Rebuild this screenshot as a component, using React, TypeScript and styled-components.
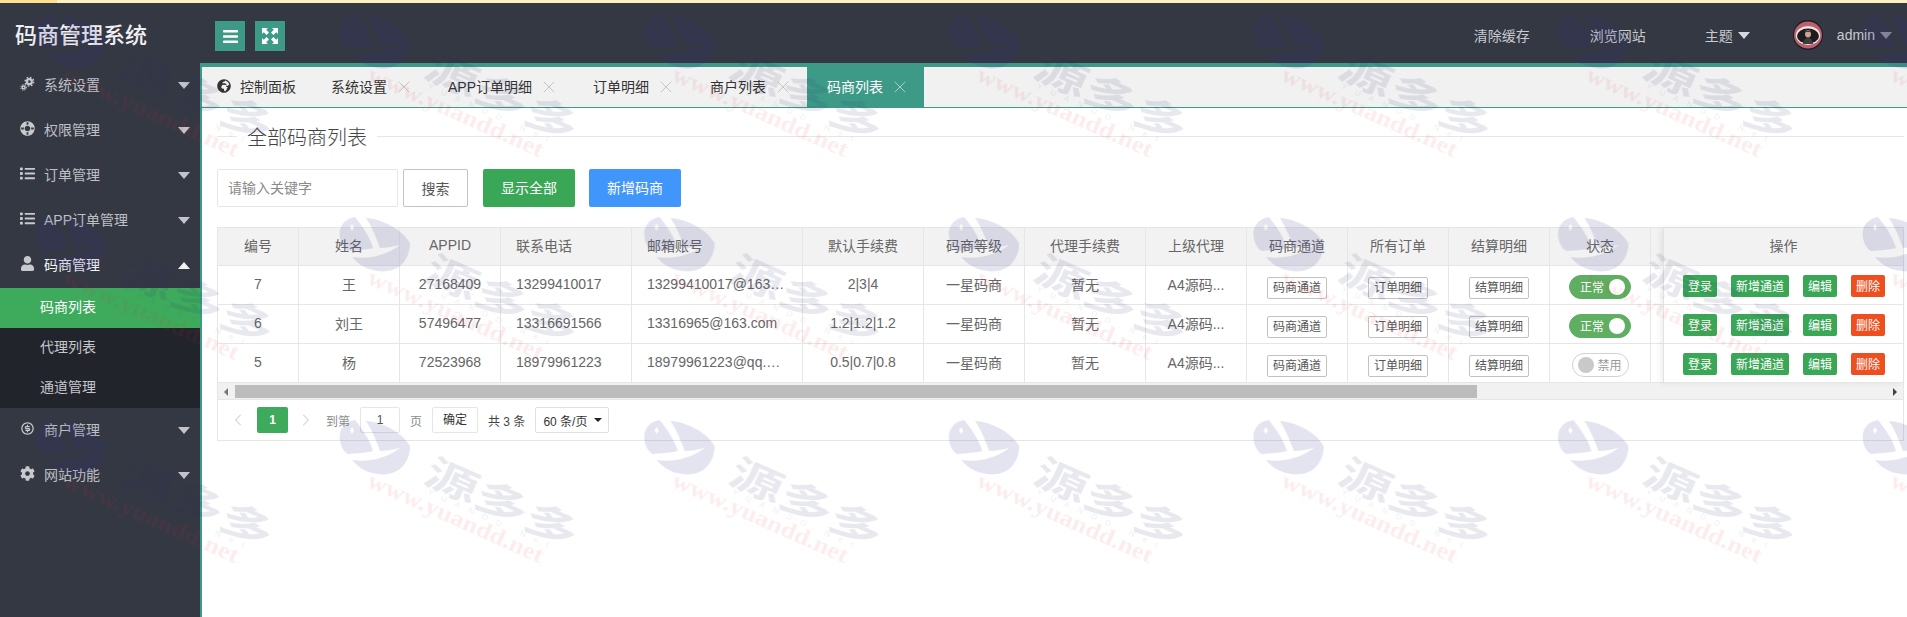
import React from "react";
import styled, { createGlobalStyle } from "styled-components";
import { FaBars, FaLifeRing, FaList, FaUser, FaCog, FaGlobeAfrica } from "react-icons/fa";
import { RiMoneyDollarCircleLine } from "react-icons/ri";
import { X, ChevronLeft, ChevronRight } from "lucide-react";

const Global = createGlobalStyle`
  html, body { margin: 0; padding: 0; height: 100%; overflow: hidden; background: #fff; }
  body, input { font-family: "Liberation Sans", "Noto Sans CJK SC", sans-serif; }
  * { box-sizing: border-box; }
`;

const Page = styled.div`
  display: flex;
  flex-direction: column;
  height: 617px;
  width: 1907px;
`;

const Strip = styled.div`
  display: flex;
  height: 3px;
  flex: none;
  background: #fdf1bd;
`;
const StripLead = styled.div`
  width: 57px;
  background: #fde08f;
`;

const Header = styled.header`
  display: flex;
  align-items: center;
  height: 60px;
  flex: none;
  padding-top: 6px;
  background: #343843;
`;
const Logo = styled.div`
  width: 215px;
  padding-left: 15px;
  font-size: 22px;
  font-weight: 500;
  line-height: 30px;
  color: #f0f0f2;
`;
const ToolButton = styled.button`
  display: flex;
  align-items: center;
  justify-content: center;
  width: 30px;
  height: 30px;
  margin-right: 10px;
  padding: 0;
  border: 0;
  background: #3d9a87;
  color: #fff;
`;
const HeaderRight = styled.nav`
  display: flex;
  align-items: center;
  margin-left: auto;
  padding: 0 15px 2px 0;
  color: #c9cad0;
  font-size: 14px;
`;
const HeaderLink = styled.span<{ $gap: number }>`
  display: flex;
  align-items: center;
  gap: 5px;
  margin-right: ${(p) => p.$gap}px;
`;
const Caret = styled.i<{ $up?: boolean; $color?: string; $w?: number }>`
  display: inline-block;
  flex: none;
  width: 0;
  height: 0;
  border-left: ${(p) => p.$w ?? 6}px solid transparent;
  border-right: ${(p) => p.$w ?? 6}px solid transparent;
  ${(p) =>
    p.$up
      ? `border-bottom: ${Math.round((p.$w ?? 6) * 1.1)}px solid ${p.$color ?? "#c4c4c8"};`
      : `border-top: ${Math.round((p.$w ?? 6) * 1.1)}px solid ${p.$color ?? "#c4c4c8"};`}
`;
const AvatarSvg = styled.svg`
  width: 30px;
  height: 30px;
  margin-right: 14px;
  flex: none;
`;

const Shell = styled.div`
  display: flex;
  flex: 1;
  min-height: 0;
`;
const Sidebar = styled.aside`
  width: 200px;
  flex: none;
  background: #343843;
`;
const MenuItem = styled.div<{ $open?: boolean }>`
  display: flex;
  align-items: center;
  height: 45px;
  padding: 0 10px 0 20px;
  font-size: 14px;
  color: ${(p) => (p.$open ? "#f4f4f4" : "#bfc0c5")};
`;
const MenuIcon = styled.span`
  display: flex;
  align-items: center;
  justify-content: center;
  width: 15px;
  margin-right: 9px;
  padding-bottom: 4px;
  font-size: 15px;
  color: #c8c9ce;
`;
const MenuLabel = styled.span`
  flex: 1;
  padding-bottom: 4px;
`;
const RingIcon = styled(FaLifeRing)`
  transform: rotate(45deg);
`;
const SubMenu = styled.div`
  background: #22242c;
`;
const SubItem = styled.div<{ $active?: boolean }>`
  height: 40px;
  line-height: 38px;
  padding-left: 40px;
  font-size: 14px;
  color: ${(p) => (p.$active ? "#fff" : "#c6c7cb")};
  background: ${(p) => (p.$active ? "#3dab5b" : "transparent")};
`;

const Main = styled.main`
  flex: 1;
  min-width: 0;
  border-top: 4px solid #3d9a87;
  border-left: 2px solid #3d9a87;
  display: flex;
  flex-direction: column;
`;
const TabBar = styled.div`
  display: flex;
  height: 41px;
  flex: none;
  background: #f1f1f1;
  border-bottom: 1px solid #3d9a87;
`;
const HomeTab = styled.div`
  display: flex;
  align-items: center;
  gap: 9px;
  width: 109px;
  padding: 0 0 2px 15px;
  font-size: 14px;
  color: #333;
`;
const Tab = styled.div<{ $active?: boolean }>`
  display: flex;
  align-items: center;
  gap: 10px;
  padding: 0 17px 2px 20px;
  font-size: 14px;
  color: ${(p) => (p.$active ? "#fff" : "#333")};
  background: ${(p) => (p.$active ? "#3d9a87" : "transparent")};
  svg {
    margin: 2px -3px 0;
    color: ${(p) => (p.$active ? "#b9dcd4" : "#bdbdbd")};
  }
`;
const Body = styled.div`
  flex: 1;
  padding: 0 3px 0 15px;
`;
const TitleRow = styled.div`
  display: flex;
  align-items: center;
  gap: 10px;
  height: 56px;
  font-size: 20px;
  font-weight: 300;
  color: #444;
`;
const TitleLine = styled.span<{ $grow?: boolean }>`
  height: 1px;
  background: #e6e6e6;
  width: 20px;
  flex: ${(p) => (p.$grow ? 1 : "none")};
`;
const Filter = styled.div`
  display: flex;
  height: 38px;
  margin-top: 5px;
`;
const SearchInput = styled.input`
  width: 181px;
  height: 38px;
  padding: 0 10px;
  border: 1px solid #e6e6e6;
  border-radius: 2px;
  font-size: 14px;
  outline: none;
  &::placeholder {
    color: #8a8a8a;
  }
`;
const SearchButton = styled.button`
  width: 65px;
  height: 38px;
  margin: 0 15px 0 5px;
  padding: 0;
  border: 1px solid #c4c4c4;
  border-radius: 2px;
  background: #fff;
  font: inherit;
  font-size: 14px;
  color: #555;
`;
const SolidButton = styled.button<{ $bg: string }>`
  width: 92px;
  height: 38px;
  margin-right: 14px;
  padding: 0 0 2px;
  border: 0;
  border-radius: 2px;
  background: ${(p) => p.$bg};
  color: #fff;
  font: inherit;
  font-size: 14px;
`;

const TableBox = styled.div`
  position: relative;
  margin-top: 20px;
  border: 1px solid #e6e6e6;
  width: 1687px;
`;
const TableClip = styled.div`
  overflow: hidden;
`;
const Table = styled.table`
  table-layout: fixed;
  border-collapse: separate;
  border-spacing: 0;
  width: 1686px;
  font-size: 14px;
  color: #666;
`;
const Th = styled.th<{ $left?: boolean }>`
  height: 38px;
  padding: 0 15px 3px;
  font-weight: 400;
  text-align: ${(p) => (p.$left ? "left" : "center")};
  background: #f2f2f2;
  border-right: 1px solid #e6e6e6;
  border-bottom: 1px solid #e6e6e6;
  white-space: nowrap;
`;
const Td = styled.td<{ $left?: boolean; $tight?: boolean; $control?: boolean }>`
  height: 39px;
  padding: ${(p) => (p.$control ? "0" : p.$tight ? "0 0 3px" : "0 15px 3px")};
  text-align: ${(p) => (p.$left ? "left" : "center")};
  border-right: 1px solid #e6e6e6;
  border-bottom: 1px solid #e6e6e6;
  white-space: nowrap;
  overflow: hidden;
  text-overflow: ellipsis;
`;
const LinkButton = styled.button`
  display: inline-block;
  vertical-align: middle;
  width: 60px;
  height: 22px;
  margin-top: 5px;
  padding: 0;
  border: 1px solid #c2c2c2;
  border-radius: 2px;
  background: #fff;
  font: inherit;
  font-size: 12px;
  line-height: 20px;
  color: #555;
`;
const Switch = styled.span<{ $on: boolean }>`
  display: inline-flex;
  align-items: center;
  vertical-align: middle;
  flex-direction: ${(p) => (p.$on ? "row" : "row-reverse")};
  justify-content: space-between;
  width: ${(p) => (p.$on ? 62 : 57)}px;
  height: 24px;
  margin-top: 3px;
  padding: ${(p) => (p.$on ? "0 5px 0 10px" : "0 6px 0 5px")};
  border-radius: 12px;
  border: 1px solid ${(p) => (p.$on ? "#5fae62" : "#d2d2d2")};
  background: ${(p) => (p.$on ? "#5fae62" : "#fff")};
  color: ${(p) => (p.$on ? "#fff" : "#999")};
  font-size: 12px;
`;
const Knob = styled.i<{ $on: boolean }>`
  display: block;
  width: 16px;
  height: 16px;
  border-radius: 50%;
  background: ${(p) => (p.$on ? "#fff" : "#c9c9c9")};
`;
const FixedColumn = styled.div`
  position: absolute;
  top: 0;
  right: 0;
  width: 240px;
  background: #fff;
  border-left: 1px solid #e2e2e2;
  box-shadow: -2px 0 6px rgba(0, 0, 0, 0.07);
`;
const FixedHead = styled.div`
  display: flex;
  align-items: center;
  justify-content: center;
  height: 38px;
  padding-bottom: 3px;
  font-size: 14px;
  color: #666;
  background: #f2f2f2;
  border-bottom: 1px solid #e6e6e6;
`;
const FixedRow = styled.div`
  display: flex;
  align-items: center;
  gap: 14px;
  height: 39px;
  padding: 1px 0 0 19px;
  border-bottom: 1px solid #e6e6e6;
`;
const OpButton = styled.button<{ $danger?: boolean }>`
  height: 22px;
  padding: 0 5px;
  border: 0;
  border-radius: 2px;
  background: ${(p) => (p.$danger ? "#ee4f20" : "#3aa757")};
  color: #fff;
  font: inherit;
  font-size: 12px;
  white-space: nowrap;
`;
const ScrollTrack = styled.div`
  display: flex;
  align-items: center;
  height: 17px;
  padding-top: 1px;
  background: #f1f1f1;
  border-bottom: 1px solid #e6e6e6;
`;
const ScrollArrow = styled.span<{ $end?: boolean }>`
  width: 0;
  height: 0;
  flex: none;
  border-top: 4px solid transparent;
  border-bottom: 4px solid transparent;
  ${(p) =>
    p.$end
      ? "margin-left: auto; margin-right: 6px; border-left: 4px solid #444;"
      : "margin: 0 7px 0 6px; border-right: 4px solid #777;"}
`;
const ScrollThumb = styled.span`
  display: block;
  width: 1242px;
  height: 13px;
  background: #bcbcbc;
`;
const Pager = styled.div`
  display: flex;
  align-items: center;
  gap: 10px;
  height: 40px;
  font-size: 12px;
  color: #8c8c8c;
`;
const PagerArrow = styled.span<{ $w: number }>`
  display: flex;
  align-items: center;
  justify-content: center;
  width: ${(p) => p.$w}px;
  margin-right: -10px;
  color: #b4b4b4;
`;
const PageCurrent = styled.span`
  width: 31px;
  height: 26px;
  margin-right: -10px;
  line-height: 26px;
  text-align: center;
  border-radius: 2px;
  background: #3dab5b;
  color: #fff;
  font-weight: 700;
`;
const PagerLead = styled.span`
  margin-left: 2px;
`;
const PagerInput = styled.span`
  width: 40px;
  height: 26px;
  line-height: 24px;
  text-align: center;
  border: 1px solid #e6e6e6;
  border-radius: 2px;
  color: #555;
`;
const PagerGo = styled.span`
  width: 46px;
  height: 26px;
  line-height: 25px;
  text-align: center;
  border: 1px solid #e6e6e6;
  border-radius: 2px;
  color: #333;
`;
const PagerCount = styled.span`
  color: #444;
`;
const PagerSelect = styled.span`
  display: flex;
  align-items: center;
  justify-content: space-between;
  width: 74px;
  height: 26px;
  padding: 0 6px 0 7px;
  border: 1px solid #e0e0e0;
  border-radius: 2px;
  color: #333;
`;

const WatermarkLayer = styled.svg`
  position: fixed;
  inset: 0;
  width: 1907px;
  height: 617px;
  pointer-events: none;
`;

const GearsIcon = () => (
  <svg width="15" height="15" viewBox="0 0 16 16" fill="none" stroke="currentColor">
    <circle cx="10" cy="6" r="2.6" strokeWidth="2.4" />
    <circle cx="10" cy="6" r="4.6" strokeWidth="1.5" strokeDasharray="1.8 1.8" />
    <circle cx="3.8" cy="12.2" r="1.5" strokeWidth="1.6" />
    <circle cx="3.8" cy="12.2" r="2.9" strokeWidth="1.1" strokeDasharray="1.2 1.2" />
  </svg>
);

const corner = "M0 0 H6 L4.2 1.8 L7 4.6 L4.6 7 L1.8 4.2 L0 6 Z";
const ExpandIcon = () => (
  <svg width="16" height="16" viewBox="0 0 16 16" fill="currentColor">
    <path d={corner} />
    <path d={corner} transform="matrix(-1 0 0 1 16 0)" />
    <path d={corner} transform="matrix(1 0 0 -1 0 16)" />
    <path d={corner} transform="matrix(-1 0 0 -1 16 16)" />
  </svg>
);

const Avatar = () => (
  <AvatarSvg viewBox="0 0 30 30">
    <circle cx="15" cy="15" r="15" fill="#1d1d22" />
    <ellipse cx="15" cy="15" rx="14" ry="13.6" fill="#b9616c" />
    <ellipse cx="15" cy="15.5" rx="12.2" ry="9.4" fill="#f1e3e3" />
    <ellipse cx="15" cy="16" rx="11" ry="7.6" fill="#1f1c20" />
    <ellipse cx="15" cy="13.8" rx="3" ry="3.8" fill="#caa792" />
    <path d="M11.8 13 C12 9.6 18 9.6 18.2 13 L17 11.8 L13 11.8 Z" fill="#17151a" />
    <path d="M10 24 C10.5 19 13 18 15 18 C17 18 19.5 19 20 24 Z" fill="#3b3b42" />
  </AvatarSvg>
);

const Watermark = () => (
  <WatermarkLayer aria-hidden="true">
    <defs>
      <pattern id="wm" patternUnits="userSpaceOnUse" x="25.4" y="4" width="304.6" height="203">
        <g fill="rgba(46,46,150,0.13)">
          <path
            fillRule="evenodd"
            d="M25 10 C14 12 8 20 10 31 C11 37 14 42 18 44 C26 43 36 43 43 41 C40 30 33 20 25 10 Z M22 17 L24 20.5 L22 24 L20 20.5 Z"
          />
          <path d="M36 11 C52 12 72 22 80 36 C80 50 72 62 58 64 C44 66 30 60 22 50 C36 52 54 50 70 38 C62 40 56 41 50 41 C46 30 42 20 36 11 Z" />
        </g>
        <text
          transform="translate(92 72) rotate(24) scale(1.36 0.95)"
          fontFamily="'Noto Sans CJK SC', sans-serif"
          fontWeight="700"
          fontSize="40"
          fill="rgba(50,50,110,0.11)"
        >
          源多多
        </text>
        <text
          transform="translate(97 84) rotate(24)"
          fontFamily="'Liberation Sans', sans-serif"
          fontSize="8"
          textLength="132"
          fill="rgba(60,60,100,0.09)"
        >
          YUANDD.Net
        </text>
        <text
          transform="translate(36 76) rotate(24)"
          fontFamily="'Liberation Serif', serif"
          fontWeight="700"
          fontSize="23"
          textLength="190"
          lengthAdjust="spacingAndGlyphs"
          fill="rgba(220,40,50,0.09)"
        >
          www.yuandd.net
        </text>
      </pattern>
    </defs>
    <rect width="1907" height="617" fill="url(#wm)" />
  </WatermarkLayer>
);

const menuTop = [
  { label: "系统设置", icon: <GearsIcon /> },
  { label: "权限管理", icon: <RingIcon /> },
  { label: "订单管理", icon: <FaList /> },
  { label: "APP订单管理", icon: <FaList /> },
];
const menuBottom = [
  { label: "商户管理", icon: <RiMoneyDollarCircleLine size={17} /> },
  { label: "网站功能", icon: <FaCog size={15} /> },
];
const tabs = ["系统设置", "APP订单明细", "订单明细", "商户列表"];

const columns = [
  { title: "编号", w: 81 },
  { title: "姓名", w: 101 },
  { title: "APPID", w: 101 },
  { title: "联系电话", w: 131, left: true },
  { title: "邮箱账号", w: 171, left: true },
  { title: "默认手续费", w: 121 },
  { title: "码商等级", w: 101 },
  { title: "代理手续费", w: 121 },
  { title: "上级代理", w: 101 },
  { title: "码商通道", w: 101 },
  { title: "所有订单", w: 101 },
  { title: "结算明细", w: 101 },
  { title: "状态", w: 101 },
  { title: "", w: 253 },
];

const rows = [
  { id: "7", name: "王", appid: "27168409", tel: "13299410017", mail: "13299410017@163.com", fee: "2|3|4", on: true },
  { id: "6", name: "刘王", appid: "57496477", tel: "13316691566", mail: "13316965@163.com", fee: "1.2|1.2|1.2", on: true },
  { id: "5", name: "杨", appid: "72523968", tel: "18979961223", mail: "18979961223@qq.com", fee: "0.5|0.7|0.8", on: false },
];

export default function App() {
  return (
    <Page>
      <Global />
      <Strip>
        <StripLead />
      </Strip>
      <Header>
        <Logo>码商管理系统</Logo>
        <ToolButton aria-label="菜单">
          <FaBars size={17} />
        </ToolButton>
        <ToolButton aria-label="全屏">
          <ExpandIcon />
        </ToolButton>
        <HeaderRight>
          <HeaderLink $gap={60}>清除缓存</HeaderLink>
          <HeaderLink $gap={59}>浏览网站</HeaderLink>
          <HeaderLink $gap={43}>
            主题
            <Caret $color="#d8d8dc" />
          </HeaderLink>
          <Avatar />
          <HeaderLink $gap={0}>
            admin
            <Caret $color="#8f9098" />
          </HeaderLink>
        </HeaderRight>
      </Header>
      <Shell>
        <Sidebar>
          {menuTop.map((m) => (
            <MenuItem key={m.label}>
              <MenuIcon>{m.icon}</MenuIcon>
              <MenuLabel>{m.label}</MenuLabel>
              <Caret />
            </MenuItem>
          ))}
          <MenuItem $open>
            <MenuIcon>
              <FaUser />
            </MenuIcon>
            <MenuLabel>码商管理</MenuLabel>
            <Caret $up $color="#f2f2f2" />
          </MenuItem>
          <SubMenu>
            <SubItem $active>码商列表</SubItem>
            <SubItem>代理列表</SubItem>
            <SubItem>通道管理</SubItem>
          </SubMenu>
          {menuBottom.map((m) => (
            <MenuItem key={m.label}>
              <MenuIcon>{m.icon}</MenuIcon>
              <MenuLabel>{m.label}</MenuLabel>
              <Caret />
            </MenuItem>
          ))}
        </Sidebar>
        <Main>
          <TabBar>
            <HomeTab>
              <FaGlobeAfrica size={14} />
              控制面板
            </HomeTab>
            {tabs.map((t) => (
              <Tab key={t}>
                {t}
                <X size={20} strokeWidth={1} />
              </Tab>
            ))}
            <Tab $active>
              码商列表
              <X size={20} strokeWidth={1} />
            </Tab>
          </TabBar>
          <Body>
            <TitleRow>
              <TitleLine />
              全部码商列表
              <TitleLine $grow />
            </TitleRow>
            <Filter>
              <SearchInput placeholder="请输入关键字" />
              <SearchButton>搜索</SearchButton>
              <SolidButton $bg="#3aa757">显示全部</SolidButton>
              <SolidButton $bg="#4096fb">新增码商</SolidButton>
            </Filter>
            <TableBox>
              <TableClip>
                <Table>
                  <colgroup>
                    {columns.map((c, i) => (
                      <col key={i} width={c.w} />
                    ))}
                  </colgroup>
                  <thead>
                    <tr>
                      {columns.map((c, i) => (
                        <Th key={i} $left={c.left}>
                          {c.title}
                        </Th>
                      ))}
                    </tr>
                  </thead>
                  <tbody>
                    {rows.map((r) => (
                      <tr key={r.id}>
                        <Td>{r.id}</Td>
                        <Td>{r.name}</Td>
                        <Td $tight>{r.appid}</Td>
                        <Td $left>{r.tel}</Td>
                        <Td $left>{r.mail}</Td>
                        <Td $tight>{r.fee}</Td>
                        <Td $tight>一星码商</Td>
                        <Td>暂无</Td>
                        <Td $tight>A4源码...</Td>
                        <Td $control>
                          <LinkButton>码商通道</LinkButton>
                        </Td>
                        <Td $control>
                          <LinkButton>订单明细</LinkButton>
                        </Td>
                        <Td $control>
                          <LinkButton>结算明细</LinkButton>
                        </Td>
                        <Td $control>
                          <Switch $on={r.on}>
                            {r.on ? "正常" : "禁用"}
                            <Knob $on={r.on} />
                          </Switch>
                        </Td>
                        <Td $control />
                      </tr>
                    ))}
                  </tbody>
                </Table>
              </TableClip>
              <FixedColumn>
                <FixedHead>操作</FixedHead>
                {rows.map((r) => (
                  <FixedRow key={r.id}>
                    <OpButton>登录</OpButton>
                    <OpButton>新增通道</OpButton>
                    <OpButton>编辑</OpButton>
                    <OpButton $danger>删除</OpButton>
                  </FixedRow>
                ))}
              </FixedColumn>
              <ScrollTrack>
                <ScrollArrow />
                <ScrollThumb />
                <ScrollArrow $end />
              </ScrollTrack>
              <Pager>
                <PagerArrow $w={39}>
                  <ChevronLeft size={20} strokeWidth={1} />
                </PagerArrow>
                <PageCurrent>1</PageCurrent>
                <PagerArrow $w={36}>
                  <ChevronRight size={20} strokeWidth={1} />
                </PagerArrow>
                <PagerLead>到第</PagerLead>
                <PagerInput>1</PagerInput>
                <span>页</span>
                <PagerGo>确定</PagerGo>
                <PagerCount>共 3 条</PagerCount>
                <PagerSelect>
                  60 条/页
                  <Caret $w={4} $color="#222" />
                </PagerSelect>
              </Pager>
            </TableBox>
          </Body>
        </Main>
      </Shell>
      <Watermark />
    </Page>
  );
}
